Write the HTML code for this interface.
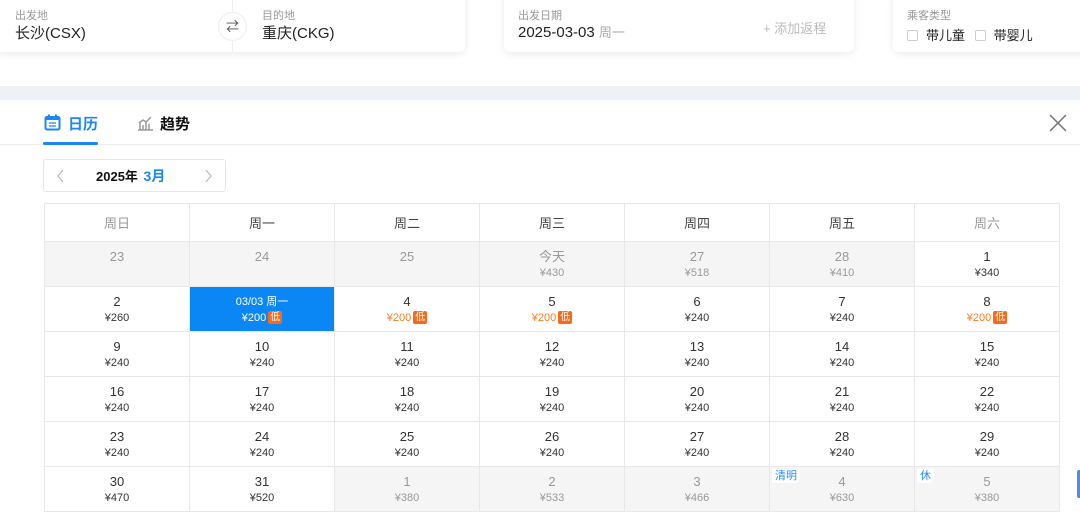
<!DOCTYPE html>
<html><head><meta charset="utf-8"><style>
*{margin:0;padding:0;box-sizing:border-box}
body{width:1080px;height:515px;overflow:hidden;background:#fff;font-family:"Liberation Sans","Noto Sans CJK SC",sans-serif;position:relative;color:#333}
.card{position:absolute;top:-10px;height:62px;background:#fff;border-radius:6px;box-shadow:0 2px 8px rgba(0,0,0,.08)}
.lbl{position:absolute;top:17px;font-size:11px;color:#999}
.val{position:absolute;top:32px;font-size:15px;color:#222}
.band{position:absolute;left:0;top:86px;width:1080px;height:14px;background:#eef1f6}
.tabs{position:absolute;left:0;top:100px;width:1080px;height:45px;border-bottom:1px solid #ececec}
table{position:absolute;left:44px;top:203px;width:1016px;border-collapse:collapse;table-layout:fixed}
td,th{border:1px solid #e8e8e8;text-align:center;font-weight:normal}
th{height:38px;font-size:13px;color:#444}
td{height:45px;vertical-align:top;padding-top:7px;position:relative}
td b{display:block;font-weight:normal;font-size:13px;color:#333;line-height:16px}
td i{display:block;font-style:normal;font-size:11px;color:#333;line-height:16px}
td.g{background:#f5f5f5}
td.g b,td.g i{color:#999}
td.o i{color:#f57c1f}
td.sel{background:#0a86f5}
td.sel b,td.sel i{color:#fff}
td.sel b{font-size:11px}
.d{display:inline-block;background:#f56a1c;color:#fff;font-size:10px;line-height:13px;padding:0 2px;border-radius:2px;margin-left:2px;vertical-align:1px}
.tag{position:absolute;left:2px;top:2px;font-size:11px;color:#2a8cf0;background:#fff;padding:0 3px;border-radius:0 0 6px 0;line-height:14px}
</style></head><body>
<div class="card" style="left:-6px;width:471px">
 <div class="lbl" style="left:21px">出发地</div><div class="val" style="left:21px">长沙(CSX)</div>
 <div style="position:absolute;left:238px;top:8px;width:1px;height:54px;background:#eee"></div>
 <div style="position:absolute;left:224px;top:22px;width:29px;height:29px;border-radius:50%;background:#fff;border:1px solid #eee;font-size:13px;text-align:center;line-height:27px;color:#555">⇄</div>
 <div class="lbl" style="left:268px">目的地</div><div class="val" style="left:268px">重庆(CKG)</div>
</div>
<div class="card" style="left:504px;width:350px">
 <div class="lbl" style="left:14px">出发日期</div><div class="val" style="left:14px">2025-03-03 <span style="font-size:13px;color:#aaa">周一</span></div>
 <div style="position:absolute;left:259px;top:28px;font-size:13px;color:#bbb">+ 添加返程</div>
</div>
<div class="card" style="left:893px;width:200px">
 <div class="lbl" style="left:14px">乘客类型</div>
 <div class="val" style="left:14px;font-size:13px;top:35px"><span style="display:inline-block;width:11px;height:11px;border:1px solid #ccc;border-radius:2px;vertical-align:-1px;margin-right:8px"></span>带儿童 <span style="display:inline-block;width:11px;height:11px;border:1px solid #ccc;border-radius:2px;vertical-align:-1px;margin:0 8px 0 6px"></span>带婴儿</div>
</div>
<div class="band"></div>
<div class="tabs">
 <svg style="position:absolute;left:44px;top:14px" width="17" height="17" viewBox="0 0 17 17"><rect x="1.5" y="3" width="14" height="12.5" rx="1.5" fill="none" stroke="#1a88f0" stroke-width="2"/><rect x="1.5" y="3" width="14" height="3" fill="#1a88f0"/><rect x="4" y="0.5" width="2" height="4" fill="#1a88f0"/><rect x="11" y="0.5" width="2" height="4" fill="#1a88f0"/><path d="M5 9h7M5 12h7" stroke="#1a88f0" stroke-width="1.2"/></svg>
 <div style="position:absolute;left:68px;top:13px;font-size:15px;font-weight:bold;color:#1a88f0">日历</div>
 <div style="position:absolute;left:43px;top:42px;width:55px;height:3px;background:#1a88f0;border-radius:2px"></div>
 <svg style="position:absolute;left:137px;top:14px" width="17" height="17" viewBox="0 0 17 17"><path d="M1 16h15M3 16V9M6 16V11M9 16V8M12 16V10M2 9l4-3 3 2 5-5" fill="none" stroke="#999" stroke-width="1.5"/></svg>
 <div style="position:absolute;left:160px;top:13px;font-size:15px;font-weight:bold;color:#111">趋势</div>
 <svg style="position:absolute;left:1048px;top:13px" width="20" height="20" viewBox="0 0 20 20"><path d="M2 2L18 18M18 2L2 18" stroke="#777" stroke-width="1.5"/></svg>
</div>
<div style="position:absolute;left:43px;top:159px;width:183px;height:33px;border:1px solid #e6e6e6;border-radius:3px">
 <svg style="position:absolute;left:12px;top:9px" width="10" height="14" viewBox="0 0 10 14"><path d="M7 1L2 7l5 6" fill="none" stroke="#bbb" stroke-width="1.3"/></svg>
 <span style="position:absolute;left:52px;top:6px;font-size:13px;font-weight:bold;color:#111">2025年 <span style="color:#1a88f0;font-size:14px;margin-left:2px">3月</span></span>
 <svg style="position:absolute;left:159px;top:9px" width="10" height="14" viewBox="0 0 10 14"><path d="M3 1l5 6-5 6" fill="none" stroke="#bbb" stroke-width="1.3"/></svg>
</div>
<table>
<tr><th style="color:#999">周日</th><th>周一</th><th>周二</th><th>周三</th><th>周四</th><th>周五</th><th style="color:#999">周六</th></tr>
<tr><td class="g"><b>23</b></td><td class="g"><b>24</b></td><td class="g"><b>25</b></td><td class="g"><b>今天</b><i>¥430</i></td><td class="g"><b>27</b><i>¥518</i></td><td class="g"><b>28</b><i>¥410</i></td><td><b>1</b><i>¥340</i></td></tr>
<tr><td><b>2</b><i>¥260</i></td><td class="sel"><b>03/03 周一</b><i>¥200<span class="d">低</span></i></td><td class="o"><b>4</b><i>¥200<span class="d">低</span></i></td><td class="o"><b>5</b><i>¥200<span class="d">低</span></i></td><td><b>6</b><i>¥240</i></td><td><b>7</b><i>¥240</i></td><td class="o"><b>8</b><i>¥200<span class="d">低</span></i></td></tr>
<tr><td><b>9</b><i>¥240</i></td><td><b>10</b><i>¥240</i></td><td><b>11</b><i>¥240</i></td><td><b>12</b><i>¥240</i></td><td><b>13</b><i>¥240</i></td><td><b>14</b><i>¥240</i></td><td><b>15</b><i>¥240</i></td></tr>
<tr><td><b>16</b><i>¥240</i></td><td><b>17</b><i>¥240</i></td><td><b>18</b><i>¥240</i></td><td><b>19</b><i>¥240</i></td><td><b>20</b><i>¥240</i></td><td><b>21</b><i>¥240</i></td><td><b>22</b><i>¥240</i></td></tr>
<tr><td><b>23</b><i>¥240</i></td><td><b>24</b><i>¥240</i></td><td><b>25</b><i>¥240</i></td><td><b>26</b><i>¥240</i></td><td><b>27</b><i>¥240</i></td><td><b>28</b><i>¥240</i></td><td><b>29</b><i>¥240</i></td></tr>
<tr><td><b>30</b><i>¥470</i></td><td><b>31</b><i>¥520</i></td><td class="g"><b>1</b><i>¥380</i></td><td class="g"><b>2</b><i>¥533</i></td><td class="g"><b>3</b><i>¥466</i></td><td class="g"><span class="tag">清明</span><b>4</b><i>¥630</i></td><td class="g"><span class="tag">休</span><b>5</b><i>¥380</i></td></tr>
</table>
<div style="position:absolute;left:1077px;top:470px;width:4px;height:28px;background:#4a90e2;border-radius:2px 0 0 2px"></div>
</body></html>
